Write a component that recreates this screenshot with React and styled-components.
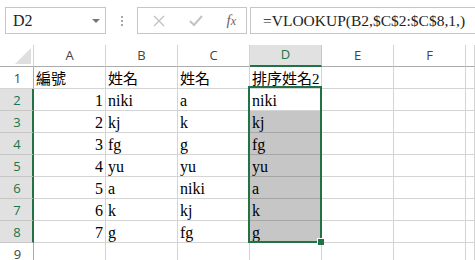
import React from "react";
import styled, { createGlobalStyle } from "styled-components";

const GREEN = "#217346";

const rows = [
  [1, "niki", "a", "niki"],
  [2, "kj", "k", "kj"],
  [3, "fg", "g", "fg"],
  [4, "yu", "yu", "yu"],
  [5, "a", "niki", "a"],
  [6, "k", "kj", "k"],
  [7, "g", "fg", "g"],
];

const columns = ["A", "B", "C", "D", "E", "F", ""];

export default function App() {
  return (
    <>
      <GlobalStyle />
      <Toolbar>
        <NameBox>
          <span>D2</span>
          <Caret />
        </NameBox>
        <Grip>
          <i />
          <i />
          <i />
        </Grip>
        <FuncBox>
          <svg width="12" height="12" viewBox="0 0 12 12">
            <path d="M1 1 L11 11 M11 1 L1 11" stroke="#c3c3c3" strokeWidth="1.4" fill="none" />
          </svg>
          <svg width="14" height="12" viewBox="0 0 14 12">
            <path d="M1 6 L5 10 L13 1" stroke="#c3c3c3" strokeWidth="2" fill="none" />
          </svg>
          <Fx>
            f<small>x</small>
          </Fx>
        </FuncBox>
        <FormulaBox>=VLOOKUP(B2,$C$2:$C$8,1,)</FormulaBox>
      </Toolbar>

      <Sheet>
        <Corner>
          <svg width="16" height="16" viewBox="0 0 16 16">
            <path d="M16 0 L16 16 L0 16 Z" fill="#dfdfdf" />
          </svg>
        </Corner>
        {columns.map((c, i) => (
          <ColHead key={i} $active={c === "D"}>
            {c}
          </ColHead>
        ))}

        <RowHead>1</RowHead>
        <Cell $cjk>編號</Cell>
        <Cell $cjk>姓名</Cell>
        <Cell $cjk>姓名</Cell>
        <Cell $cjk>排序姓名2</Cell>
        <Cell />
        <Cell />
        <Cell />

        {rows.map(([n, b, c, d], i) => (
          <React.Fragment key={n}>
            <RowHead $active>{i + 2}</RowHead>
            <Cell $align="right">{n}</Cell>
            <Cell>{b}</Cell>
            <Cell>{c}</Cell>
            <Cell $shaded={i > 0}>{d}</Cell>
            <Cell />
            <Cell />
            <Cell />
          </React.Fragment>
        ))}

        <RowHead>9</RowHead>
        {columns.map((c, i) => (
          <Cell key={i} />
        ))}

        <Selection>
          <Handle />
        </Selection>
      </Sheet>
    </>
  );
}

const GlobalStyle = createGlobalStyle`
  html, body {
    margin: 0;
    background: #fff;
    overflow: hidden;
  }
  body {
    width: 475px;
    height: 260px;
    font-family: "Liberation Sans", Arial, sans-serif;
  }
`;

const Toolbar = styled.div`
  display: flex;
  align-items: stretch;
  height: 27px;
  padding: 7px 0 0 5px;
`;

const NameBox = styled.div`
  box-sizing: border-box;
  width: 101px;
  border: 1px solid #c6c6c6;
  display: flex;
  align-items: center;
  justify-content: space-between;
  padding: 0 5px 0 7px;
  font-family: "Liberation Serif", serif;
  font-size: 16px;
  color: #222;
`;

const Caret = styled.span`
  width: 0;
  height: 0;
  border-left: 4px solid transparent;
  border-right: 4px solid transparent;
  border-top: 4px solid #777;
`;

const Grip = styled.div`
  width: 31px;
  display: flex;
  flex-direction: column;
  align-items: center;
  justify-content: center;
  gap: 2px;
  i {
    display: block;
    width: 2px;
    height: 2px;
    background: #a8a8a8;
  }
`;

const FuncBox = styled.div`
  box-sizing: border-box;
  width: 110px;
  border: 1px solid #c6c6c6;
  display: flex;
  align-items: center;
  padding: 0 10px 0 15px;
  justify-content: space-between;
`;

const Fx = styled.span`
  font-family: "Liberation Serif", serif;
  font-style: italic;
  font-size: 15px;
  color: #666;
  small {
    font-size: 12px;
  }
`;

const FormulaBox = styled.div`
  flex: 1;
  margin-left: 3px;
  border: 1px solid #c6c6c6;
  border-right: none;
  display: flex;
  align-items: center;
  padding-left: 12px;
  white-space: nowrap;
  font-family: "Liberation Serif", serif;
  font-size: 15.5px;
  color: #222;
`;

const Sheet = styled.div`
  position: relative;
  margin-top: 11px;
  display: grid;
  grid-template-columns: 34px repeat(6, 72px) 9px;
  grid-auto-rows: 22px;
  width: 475px;
`;

const Corner = styled.div`
  box-sizing: border-box;
  border-right: 1px solid #d4d4d4;
  border-bottom: 1px solid #ababab;
  display: flex;
  align-items: flex-end;
  justify-content: flex-end;
  padding: 0 2px 2px 0;
`;

const ColHead = styled.div`
  box-sizing: border-box;
  display: flex;
  align-items: center;
  justify-content: center;
  font-family: "Open Sans", "Liberation Sans", sans-serif;
  font-size: 13px;
  padding-bottom: 2px;
  color: ${(p) => (p.$active ? GREEN : "#444")};
  background: ${(p) => (p.$active ? "#e1e1e1" : "#fff")};
  border-right: 1px solid ${(p) => (p.$active ? "#c6c6c6" : "#d4d4d4")};
  border-bottom: ${(p) => (p.$active ? `2px solid ${GREEN}` : "1px solid #ababab")};
`;

const RowHead = styled.div`
  box-sizing: border-box;
  display: flex;
  align-items: center;
  justify-content: center;
  font-family: "Open Sans", "Liberation Sans", sans-serif;
  font-size: 13px;
  padding-left: 2px;
  color: ${(p) => (p.$active ? GREEN : "#444")};
  background: ${(p) => (p.$active ? "#e1e1e1" : "#fff")};
  border-right: ${(p) => (p.$active ? `2px solid ${GREEN}` : "1px solid #ababab")};
  border-bottom: 1px solid ${(p) => (p.$active ? "#c6c6c6" : "#d4d4d4")};
`;

const Cell = styled.div`
  box-sizing: border-box;
  display: flex;
  align-items: flex-end;
  justify-content: ${(p) => (p.$align === "right" ? "flex-end" : "flex-start")};
  padding: 0 2px 0 2px;
  white-space: nowrap;
  font-family: "Liberation Serif", "Noto Sans CJK TC", serif;
  font-size: ${(p) => (p.$cjk ? "15px" : "16px")};
  line-height: 18px;
  color: #000;
  background: ${(p) => (p.$shaded ? "#c6c6c6" : "transparent")};
  border-right: 1px solid #d4d4d4;
  border-bottom: 1px solid ${(p) => (p.$shaded ? "#a6a6a6" : "#d4d4d4")};
`;

const Selection = styled.div`
  position: absolute;
  left: 248px;
  top: 41px;
  width: 74px;
  height: 157px;
  box-sizing: border-box;
  border: 2px solid ${GREEN};
  pointer-events: none;
`;

const Handle = styled.div`
  position: absolute;
  right: -4px;
  bottom: -4px;
  width: 6px;
  height: 6px;
  background: ${GREEN};
  border: 1px solid #fff;
  border-right: none;
  border-bottom: none;
`;
